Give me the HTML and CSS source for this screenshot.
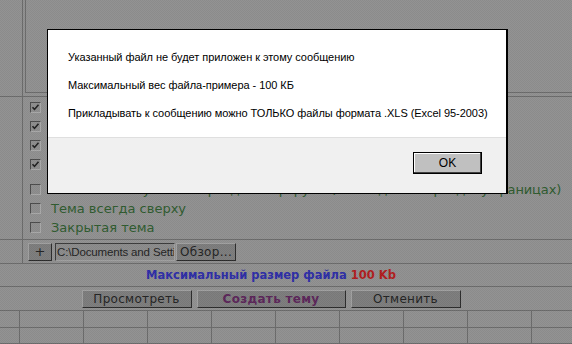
FILE: index.html
```html
<!DOCTYPE html>
<html lang="ru">
<head>
    <meta charset="UTF-8">
    <title>Новая тема</title>
    <link rel="stylesheet" href="styles.css">
</head>
<body>
    <div class="page">
        <div class="row top">
            <div class="gutter"></div>
            <div class="cell">
                <div class="textarea"></div>
            </div>
        </div>

        <div class="row">
            <div class="gutter"></div>
            <div class="cell options">
                <div class="group">
                    <label class="opt"><span class="box checked"><svg viewBox="0 0 9 9"><polyline points="1.5,4.2 3.5,6.4 7.5,1.8"/></svg></span> Подписка на ответы в теме</label>
                    <label class="opt"><span class="box checked"><svg viewBox="0 0 9 9"><polyline points="1.5,4.2 3.5,6.4 7.5,1.8"/></svg></span> Включить смайлики</label>
                    <label class="opt"><span class="box checked"><svg viewBox="0 0 9 9"><polyline points="1.5,4.2 3.5,6.4 7.5,1.8"/></svg></span> Включить подпись</label>
                    <label class="opt"><span class="box checked"><svg viewBox="0 0 9 9"><polyline points="1.5,4.2 3.5,6.4 7.5,1.8"/></svg></span> Включить теги</label>
                </div>
                <div class="group">
                    <label class="opt long"><span class="box"></span> Показать тему во всех разделах форума (в отведённых разделу границах)</label>
                    <label class="opt"><span class="box"></span> Тема всегда сверху</label>
                    <label class="opt"><span class="box"></span> Закрытая тема</label>
                </div>
            </div>
        </div>

        <div class="row">
            <div class="gutter"></div>
            <div class="cell attach">
                <button class="btn plus">+</button>
                <span class="file">C:\Documents and Settings\User\Мои документы\пример.xls</span>
                <button class="btn browse">Обзор...</button>
            </div>
        </div>

        <div class="row limit">
            <span>Максимальный размер файла <b class="size">100 Kb</b></span>
        </div>

        <div class="row actions">
            <button class="btn act">Просмотреть</button>
            <button class="btn act main">Создать тему</button>
            <button class="btn act">Отменить</button>
        </div>

        <div class="grid">
            <div></div><div></div><div></div><div></div><div></div>
            <div></div><div></div><div></div><div></div><div></div>
            <div></div><div></div><div></div><div></div><div></div>
            <div></div><div></div><div></div><div></div><div></div>
        </div>
    </div>

    <div class="overlay"></div>

    <div class="dialog">
        <div class="dialog-body">
            <p>Указанный файл не будет приложен к этому сообщению</p>
            <p>Максимальный вес файла-примера - 100 КБ</p>
            <p>Прикладывать к сообщению можно ТОЛЬКО файлы формата .XLS (Excel 95-2003)</p>
        </div>
        <div class="dialog-foot">
            <button class="ok">OK</button>
        </div>
    </div>
</body>
</html>
```

FILE: styles.css
```css
body {
    margin: 0;
    background: #8f8f8f;
    font-family: 'DejaVu Sans', Verdana, sans-serif;
    overflow: hidden;
}

.page {
    width: 572px;
    height: 344px;
    overflow: hidden;
}

.row {
    display: flex;
    border-bottom: 1px solid #6a6a6a;
}

.gutter {
    width: 22px;
    flex: none;
    border-right: 1px solid #6a6a6a;
}

.cell {
    flex: 1;
    min-width: 0;
}

/* top block: message textarea */
.top {
    height: 96px;
}

.textarea {
    margin-left: 2px;
    height: 92px;
    width: 700px;
    border-left: 1px solid #6a6a6a;
    border-bottom: 1px solid #6a6a6a;
}

/* options */
.options {
    height: 142px;
    padding: 1px 0 0 7px;
    box-sizing: border-box;
}

.group + .group {
    margin-top: 6px;
}

.opt {
    display: flex;
    align-items: center;
    height: 19px;
    font-size: 13px;
    color: #2d5a2d;
    white-space: nowrap;
}

.opt.long {
    letter-spacing: -0.12px;
}

.box {
    width: 11px;
    height: 11px;
    box-sizing: border-box;
    flex: none;
    margin-right: 10px;
    border: 1px solid;
    border-color: #4a4a4a #a8a8a8 #a8a8a8 #4a4a4a;
    background: #8c8c8c;
    display: flex;
    align-items: center;
    justify-content: center;
}

.box svg {
    width: 9px;
    height: 9px;
    fill: none;
    stroke: #1e1e1e;
    stroke-width: 1.6;
}

/* buttons on the page */
.btn {
    font-family: 'DejaVu Sans', Verdana, sans-serif;
    font-size: 12px;
    color: #222;
    background: #7c7c7c;
    border: 1px solid;
    border-color: #a0a0a0 #2a2a2a #2a2a2a #a0a0a0;
    padding: 0;
    height: 18px;
    letter-spacing: 0.3px;
}

.attach {
    height: 23px;
    display: flex;
    align-items: center;
    padding-left: 5px;
    gap: 3px;
}

.plus {
    width: 24px;
    font-size: 13px;
}

.file {
    width: 120px;
    height: 18px;
    box-sizing: border-box;
    overflow: hidden;
    white-space: nowrap;
    font-family: 'Liberation Sans', Arial, sans-serif;
    font-size: 11.5px;
    letter-spacing: -0.15px;
    line-height: 16px;
    color: #222;
    padding-left: 1px;
    border: 1px solid;
    border-color: #3a3a3a #a0a0a0 #a0a0a0 #3a3a3a;
    background: #8a8a8a;
}

.browse {
    width: 60px;
    margin-left: -2px;
}

/* size limit */
.limit {
    height: 22px;
    justify-content: center;
    align-items: center;
    padding-right: 30px;
    font-size: 11.5px;
    font-weight: bold;
    color: #2c2ca6;
}

.size {
    color: #b01c1c;
}

.actions {
    height: 23px;
    justify-content: center;
    align-items: center;
    gap: 5px;
    padding-right: 30px;
}

.act {
    width: 110px;
}

.act.main {
    width: 149px;
    font-weight: bold;
    color: #5a2458;
}

.grid {
    display: grid;
    grid-template-columns: 20px repeat(9, 64px);
    grid-template-rows: 17px 16px;
}

.grid div {
    border-right: 1px solid #6a6a6a;
    border-bottom: 1px solid #6a6a6a;
}

/* modal */
.overlay {
    position: absolute;
    inset: 0;
    background: repeating-conic-gradient(rgba(255, 255, 255, 0.03) 0 25%, rgba(0, 0, 0, 0.03) 0 50%) 0 0 / 2px 2px;
}

.dialog {
    position: absolute;
    left: 47px;
    top: 29px;
    width: 461px;
    height: 165px;
    box-sizing: border-box;
    border: 1px solid #000;
    border-width: 1px 2px 1px 1px;
    background: #f0f0f0;
    font-family: 'Liberation Sans', Arial, sans-serif;
    font-size: 11px;
    color: #000;
}

.dialog-body {
    background: #fff;
    height: 108px;
    padding: 21px 0 0 20px;
    box-sizing: border-box;
    border-bottom: 1px solid #dfdfdf;
    letter-spacing: -0.05px;
}

.dialog-body p {
    margin: 0 0 15px;
    line-height: 13px;
}

.dialog-foot {
    display: flex;
    justify-content: flex-end;
    padding: 14px 24px 0 0;
}

.ok {
    width: 69px;
    height: 22px;
    border: 1px solid #000;
    box-shadow: inset -1px -1px #404040, inset 1px 1px #fff;
    background: #c0c0c0;
    font-family: 'Liberation Sans', Arial, sans-serif;
    font-size: 12px;
    padding: 0;
}
```
